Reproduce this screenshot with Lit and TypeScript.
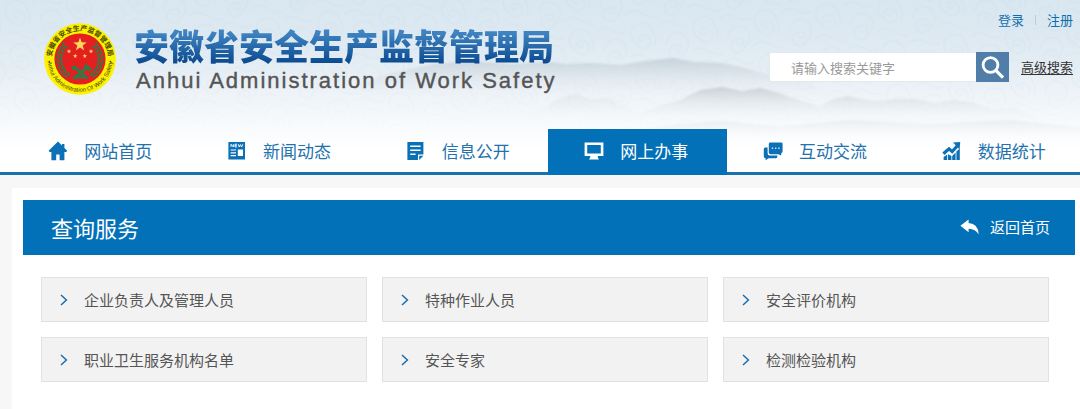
import { LitElement, html, svg, css } from "lit";
import { customElement, state } from "lit/decorators.js";
import { classMap } from "lit/directives/class-map.js";

const homeIcon = svg`<path fill="currentColor" d="M10 0.6 0.6 9.8 1.6 11H3.4V19.2H8.2V13.4H11.6V19.2H16.4V11H18.2L19.2 9.8 16.4 6.9V3H14V4.6Z"/>`;

const newsIcon = svg`
  <path fill="currentColor" fill-rule="evenodd" d="M1.4 1H18V18.4H1.4ZM10.8 8.4V15H16V8.4ZM3.6 8.4V9.6H9V8.4ZM3.6 11.2V12.4H9V11.2ZM3.6 14V15.2H9V14Z"/>
  <path fill="none" stroke="#fff" stroke-width="0.9" d="M4 6V3.2L6.4 6V3.2M10 3.2H8V6H10M8 4.6H9.8M11.2 3.2 12.2 6 13.4 3.6 14.6 6 15.8 3.2"/>`;

const documentIcon = svg`
  <path fill="currentColor" fill-rule="evenodd" d="M1.4 1H17.4V13.6H12V19H1.4ZM4.2 4.6V6H14.6V4.6ZM4.2 8.6V10H14.6V8.6ZM4.2 12.6V14H9.6V12.6Z"/>
  <path fill="currentColor" d="M13.2 14.8H17.4L13.2 19Z"/>`;

const screenIcon = svg`
  <path fill="currentColor" fill-rule="evenodd" d="M0.6 1.4H19.4V15H13.8V16.4L15 18.6H5L6.2 16.4V15H0.6ZM3.2 4V12.6H16.8V4Z"/>`;

const chatIcon = svg`
  <path fill="currentColor" d="M2.2 6.4H4.6V12.2Q4.6 14.4 6.8 14.4H14.4V15.6Q14.4 17.2 12.8 17.2H5.6L2.6 19.2V17.2Q0.8 17 0.8 15.4V8Q0.8 6.4 2.2 6.4Z"/>
  <path fill="currentColor" d="M7.4 1.6H18.2Q19.6 1.6 19.6 3V10.6Q19.6 12 18.2 12.2V14.4L15.2 13.2H7.4Q5.8 13.2 5.8 11.8V3Q5.8 1.6 7.4 1.6Z"/>
  <path fill="#cfe3f1" d="M8.8 6.6H10.2V8H8.8ZM12 6.6H13.4V8H12ZM15.2 6.6H16.6V8H15.2Z"/>`;

const chartIcon = svg`
  <path fill="currentColor" d="M1.6 16 5.2 13.6V19H1.6ZM6 13.2 9.4 15V19H6ZM10.2 15 13.6 11.4V19H10.2ZM14.4 10.6 17.8 7.4V19H14.4Z"/>
  <path fill="none" stroke="currentColor" stroke-width="3.2" d="M1.4 12.8 7 7.8 10.2 10.6 15.4 4.8"/>
  <path fill="currentColor" d="M11 1.6 18.2 1 17.6 8.6Z"/>`;

const NAV = [
  { label: "网站首页", icon: homeIcon },
  { label: "新闻动态", icon: newsIcon },
  { label: "信息公开", icon: documentIcon },
  { label: "网上办事", icon: screenIcon },
  { label: "互动交流", icon: chatIcon },
  { label: "数据统计", icon: chartIcon },
];

const SERVICES = [
  "企业负责人及管理人员",
  "特种作业人员",
  "安全评价机构",
  "职业卫生服务机构名单",
  "安全专家",
  "检测检验机构",
];

const starPoints = (cx: number, cy: number, r: number) =>
  Array.from({ length: 10 }, (_, i) => {
    const radius = i % 2 ? r * 0.4 : r;
    const angle = (i * Math.PI) / 5 - Math.PI / 2;
    return `${(cx + radius * Math.cos(angle)).toFixed(2)},${(cy + radius * Math.sin(angle)).toFixed(2)}`;
  }).join(" ");

@customElement("site-emblem")
class SiteEmblem extends LitElement {
  static styles = css`
    :host { display: block; flex: none; }
    .emblem { display: block; width: 72px; height: 72px; }
    .ring { font-family: "Noto Sans CJK SC", sans-serif; font-weight: 700; font-size: 7px; fill: #4a4a00; }
    .ring-en { font-family: "Liberation Sans", sans-serif; font-size: 6px; fill: #3f4400; }
  `;

  private wreath() {
    const leaf = (side: number, deg: number, radius: number, tilt: number) => {
      const a = (deg * Math.PI) / 180;
      const x = 36 + side * radius * Math.cos(a);
      const y = 36 + radius * Math.sin(a);
      return svg`<ellipse cx=${x} cy=${y} rx="1" ry="2.6" transform="rotate(${side * (deg + tilt)} ${x} ${y})"/>`;
    };
    return [-1, 1].map((side) =>
      [-42, -29, -16, -3, 10, 23, 36, 49].map((deg) => [leaf(side, deg, 22.2, 26), leaf(side, deg + 3, 18.8, -26)])
    );
  }

  render() {
    return html`
      <svg class="emblem" viewBox="0 0 72 72" role="img" aria-label="安徽省安全生产监督管理局">
        <defs>
          <path id="upper" d="M8 41A28.4 28.4 0 1 1 64 41"/>
          <path id="lower" d="M3.8 40A32.4 32.4 0 0 0 68.2 40"/>
        </defs>
        <circle cx="36" cy="36" r="35.8" fill="#fdf100"/>
        <circle cx="36" cy="36" r="25.6" fill="#e3201f"/>
        <g fill="#2f7a4a">
          ${this.wreath()}
          <path d="M27.4 43.6 31 42.4 44.6 54.6 42.6 56.8 31 46.4 28.6 47Z"/>
          <path d="M44.6 43 48 46.2 45.4 48.2 43.2 46.4 30.2 57 28.2 54.8 40.8 44.8 38.8 43.4 42 41.6Z"/>
          <path d="M32 53.4H40V55.6H32Z"/>
        </g>
        <g fill="#fbd75b">
          <polygon points=${starPoints(36, 21.6, 7)}/>
          <polygon points=${starPoints(25, 28.4, 2.4)}/>
          <polygon points=${starPoints(47, 28.4, 2.4)}/>
          <polygon points=${starPoints(31.2, 33, 2.4)}/>
          <polygon points=${starPoints(40.8, 33, 2.4)}/>
        </g>
        <circle cx="5.4" cy="38.6" r="0.8" fill="#4a4a00"/>
        <circle cx="66.6" cy="38.6" r="0.8" fill="#4a4a00"/>
        <text class="ring" text-anchor="middle"><textPath href="#upper" startOffset="50%">安徽省安全生产监督管理局</textPath></text>
        <text class="ring-en" text-anchor="middle"><textPath href="#lower" startOffset="50%">Anhui Administration Of Work Safety</textPath></text>
      </svg>
    `;
  }
}

@customElement("mountain-scene")
class MountainScene extends LitElement {
  static styles = css`
    :host { display: block; overflow: hidden; background: linear-gradient(#d9e7f0 0, #dfeaf2 45px, #e9f0f6 80px, #f5f8fb 115px, #fff 150px); }
    .scene { display: block; width: 100%; height: 100%; }
  `;

  render() {
    return html`
      <svg class="scene" viewBox="0 0 1080 172" preserveAspectRatio="xMaxYMin slice" aria-hidden="true">
        <defs>
          <pattern id="swirl" width="62" height="44" patternUnits="userSpaceOnUse" patternTransform="rotate(-6)">
            <g fill="none" stroke="#cddfea" stroke-width="1.5">
              <path d="M17 17A3 3 0 1 1 13 14A7 7 0 1 1 9 22A11 11 0 1 1 26 12A14 14 0 0 1 26 26"/>
              <path d="M47 31A3 3 0 1 0 50 28A7 7 0 1 0 54 36A11 11 0 1 0 38 26"/>
              <path d="M32 6Q40 0 48 6T62 8M0 36Q8 30 16 36T32 42"/>
            </g>
          </pattern>
          <linearGradient id="veil" x2="0" y2="1">
            <stop offset="0" stop-color="#fff" stop-opacity="0.4"/>
            <stop offset="0.8" stop-color="#fff" stop-opacity="0"/>
          </linearGradient>
          <mask id="fade"><rect width="1080" height="172" fill="url(#veil)"/></mask>
          <linearGradient id="far" gradientUnits="userSpaceOnUse" x1="0" y1="56" x2="0" y2="100">
            <stop offset="0" stop-color="#b9c5ce" stop-opacity="0.75"/>
            <stop offset="1" stop-color="#eef3f6" stop-opacity="0"/>
          </linearGradient>
          <linearGradient id="near" gradientUnits="userSpaceOnUse" x1="0" y1="84" x2="0" y2="122">
            <stop offset="0" stop-color="#b6bfc5" stop-opacity="0.75"/>
            <stop offset="1" stop-color="#f4f6f7" stop-opacity="0"/>
          </linearGradient>
          <linearGradient id="low" gradientUnits="userSpaceOnUse" x1="0" y1="118" x2="0" y2="142">
            <stop offset="0" stop-color="#c8ced2" stop-opacity="0.35"/>
            <stop offset="1" stop-color="#fff" stop-opacity="0"/>
          </linearGradient>
          <filter id="soft" x="-5%" y="-20%" width="110%" height="140%"><feGaussianBlur stdDeviation="1.1"/></filter>
        </defs>
        <rect width="1080" height="172" fill="url(#swirl)" mask="url(#fade)"/>
        <g filter="url(#soft)">
          <path fill="url(#far)" d="M330 100 380 76 410 69 434 64 470 61 510 64 550 62 565 64 590 63 620 65 645 61 672 58 695 62 722 63 745 68 765 74 800 80 825 90 846 100Z"/>
          <path fill="url(#near)" opacity="0.55" d="M510 122 545 106 562 97 576 94 588 99 608 98 630 108 660 122Z"/>
          <path fill="url(#near)" d="M620 122 660 106 680 100 700 90 722 87 742 91 760 88 776 92 796 99 820 106 833 99 848 96 872 101 900 99 916 99 934 103 952 100 975 103 992 109 1016 108 1034 117 1050 122Z"/>
          <path fill="url(#low)" d="M600 142 650 128 680 124 720 121 780 126 850 120 930 124 1010 120 1090 128V142Z"/>
        </g>
      </svg>
    `;
  }
}

@customElement("app-root")
class AppRoot extends LitElement {
  static styles = css`
    :host {
      display: flex;
      flex-direction: column;
      min-height: 100vh;
      background: #f7f7f7;
      color: #555;
      font-family: "Noto Sans CJK SC", sans-serif;
      overflow: hidden;
    }
    * { box-sizing: border-box; }
    a { color: inherit; text-decoration: none; }
    h1, h2, p, ul { margin: 0; padding: 0; font-weight: 400; }
    ul { list-style: none; }

    .header { position: relative; border-bottom: 3px solid #1b73ad; }
    .backdrop { position: absolute; inset: 0; }
    .masthead { position: relative; display: flex; justify-content: space-between; height: 129px; padding-left: 44px; }
    .brand { display: flex; gap: 18px; padding-top: 23px; }
    .site-name {
      font-size: 35px; line-height: 44px; font-weight: 900; white-space: nowrap;
      background: linear-gradient(#3f83c0 10px, #0b4a90 40px);
      -webkit-background-clip: text; background-clip: text; color: transparent;
    }
    .site-en { padding-left: 2px; font: 22px/28px "Liberation Sans", sans-serif; letter-spacing: 2px; color: #555; white-space: nowrap; -webkit-text-stroke: 0.4px #555; }

    .tools { display: flex; flex-direction: column; align-items: flex-end; gap: 22px; padding: 10px 7px 0 0; font-size: 13px; line-height: 20px; }
    .account { display: flex; align-items: center; color: #0f6fae; }
    .account a + a { margin-left: 11px; padding-left: 12px; background: linear-gradient(#b9ccd8, #b9ccd8) left center / 1px 10px no-repeat; }
    .search { display: flex; align-items: center; }
    .field { width: 207px; height: 30px; padding: 0 21px; border: 1px solid #e3e8ea; border-right: 0; border-radius: 0; background: #fff; color: #555; font: inherit; outline: none; }
    .field::placeholder { color: #999; opacity: 1; }
    .submit { display: grid; place-items: center; width: 33px; height: 30px; padding: 0; border: 0; background: #517ea8; color: #fff; cursor: pointer; }
    .submit svg { width: 26px; height: 26px; }
    .advanced { margin-left: 12px; color: #333; text-decoration: underline; text-underline-offset: 2px; }

    .nav { position: relative; display: flex; margin: 0 -4px -3px 12px; }
    .tab { flex: 1; display: flex; align-items: center; justify-content: center; gap: 16px; height: 46px; padding: 0 2px 3px 0; color: #2272ae; font-size: 17px; line-height: 24px; white-space: nowrap; }
    .tab svg { width: 20px; height: 20px; color: #0b70b5; }
    .tab.active, .tab.active svg { color: #fff; }
    .tab.active { background: #0271b7; }

    .panel { flex: 1; margin: 13px 0 0 12px; padding: 12px 5px 28px 11px; background: #fff; }
    .banner { display: flex; align-items: center; justify-content: space-between; height: 55px; padding: 0 25px 2px 28px; background: #0271b7; color: #fff; }
    .banner h2 { font-size: 22px; line-height: 32px; }
    .back { display: flex; align-items: center; gap: 11px; font-size: 15px; line-height: 24px; }
    .back svg { width: 19px; height: 16px; }
    .services { display: grid; grid-template-columns: repeat(3, 1fr); gap: 15px; padding: 22px 26px 0 18px; }
    .service { display: flex; align-items: center; gap: 16px; height: 45px; padding: 0 17px; border: 1px solid #e1e1e1; background: #f2f2f2; font-size: 15px; line-height: 24px; }
    .service svg { flex: none; width: 9px; height: 12px; color: #1c6dad; }
  `;

  @state() private active = 3;

  render() {
    return html`
      <header class="header">
        <mountain-scene class="backdrop"></mountain-scene>
        <div class="masthead">
          <div class="brand">
            <site-emblem></site-emblem>
            <div>
              <h1 class="site-name">安徽省安全生产监督管理局</h1>
              <p class="site-en" lang="en">Anhui Administration of Work Safety</p>
            </div>
          </div>
          <div class="tools">
            <div class="account"><a href="#login">登录</a><a href="#register">注册</a></div>
            <form class="search" role="search" @submit=${(e: Event) => e.preventDefault()}>
              <input class="field" type="text" aria-label="搜索" placeholder="请输入搜索关键字" />
              <button class="submit" type="submit" aria-label="搜索">
                <svg viewBox="0 0 26 26" fill="none" stroke="currentColor" aria-hidden="true">
                  <circle cx="11.5" cy="11" r="7.4" stroke-width="2.8"/>
                  <path d="M16.8 16.4 24 23.6" stroke-width="3.2"/>
                </svg>
              </button>
              <a class="advanced" href="#advanced">高级搜索</a>
            </form>
          </div>
        </div>
        <nav class="nav">
          ${NAV.map(
            (item, i) => html`
              <a class=${classMap({ tab: true, active: i === this.active })} href="#" @click=${() => (this.active = i)}>
                <svg viewBox="0 0 20 20" aria-hidden="true">${item.icon}</svg>
                <span>${item.label}</span>
              </a>
            `
          )}
        </nav>
      </header>
      <main class="panel">
        <div class="banner">
          <h2>查询服务</h2>
          <a class="back" href="#home">
            <svg viewBox="0 0 19 16" aria-hidden="true">
              <path fill="currentColor" d="M0.4 6.8 8.6 0.6V4Q18.4 4.6 18.6 15.4 15.6 10 8.6 9.8V13.2Z"/>
            </svg>
            <span>返回首页</span>
          </a>
        </div>
        <ul class="services">
          ${SERVICES.map(
            (name) => html`
              <li>
                <a class="service" href="#service">
                  <svg viewBox="0 0 9 12" fill="none" stroke="currentColor" stroke-width="1.5" aria-hidden="true"><path d="M2 1 7.4 6 2 11"/></svg>
                  <span>${name}</span>
                </a>
              </li>
            `
          )}
        </ul>
      </main>
    `;
  }
}
